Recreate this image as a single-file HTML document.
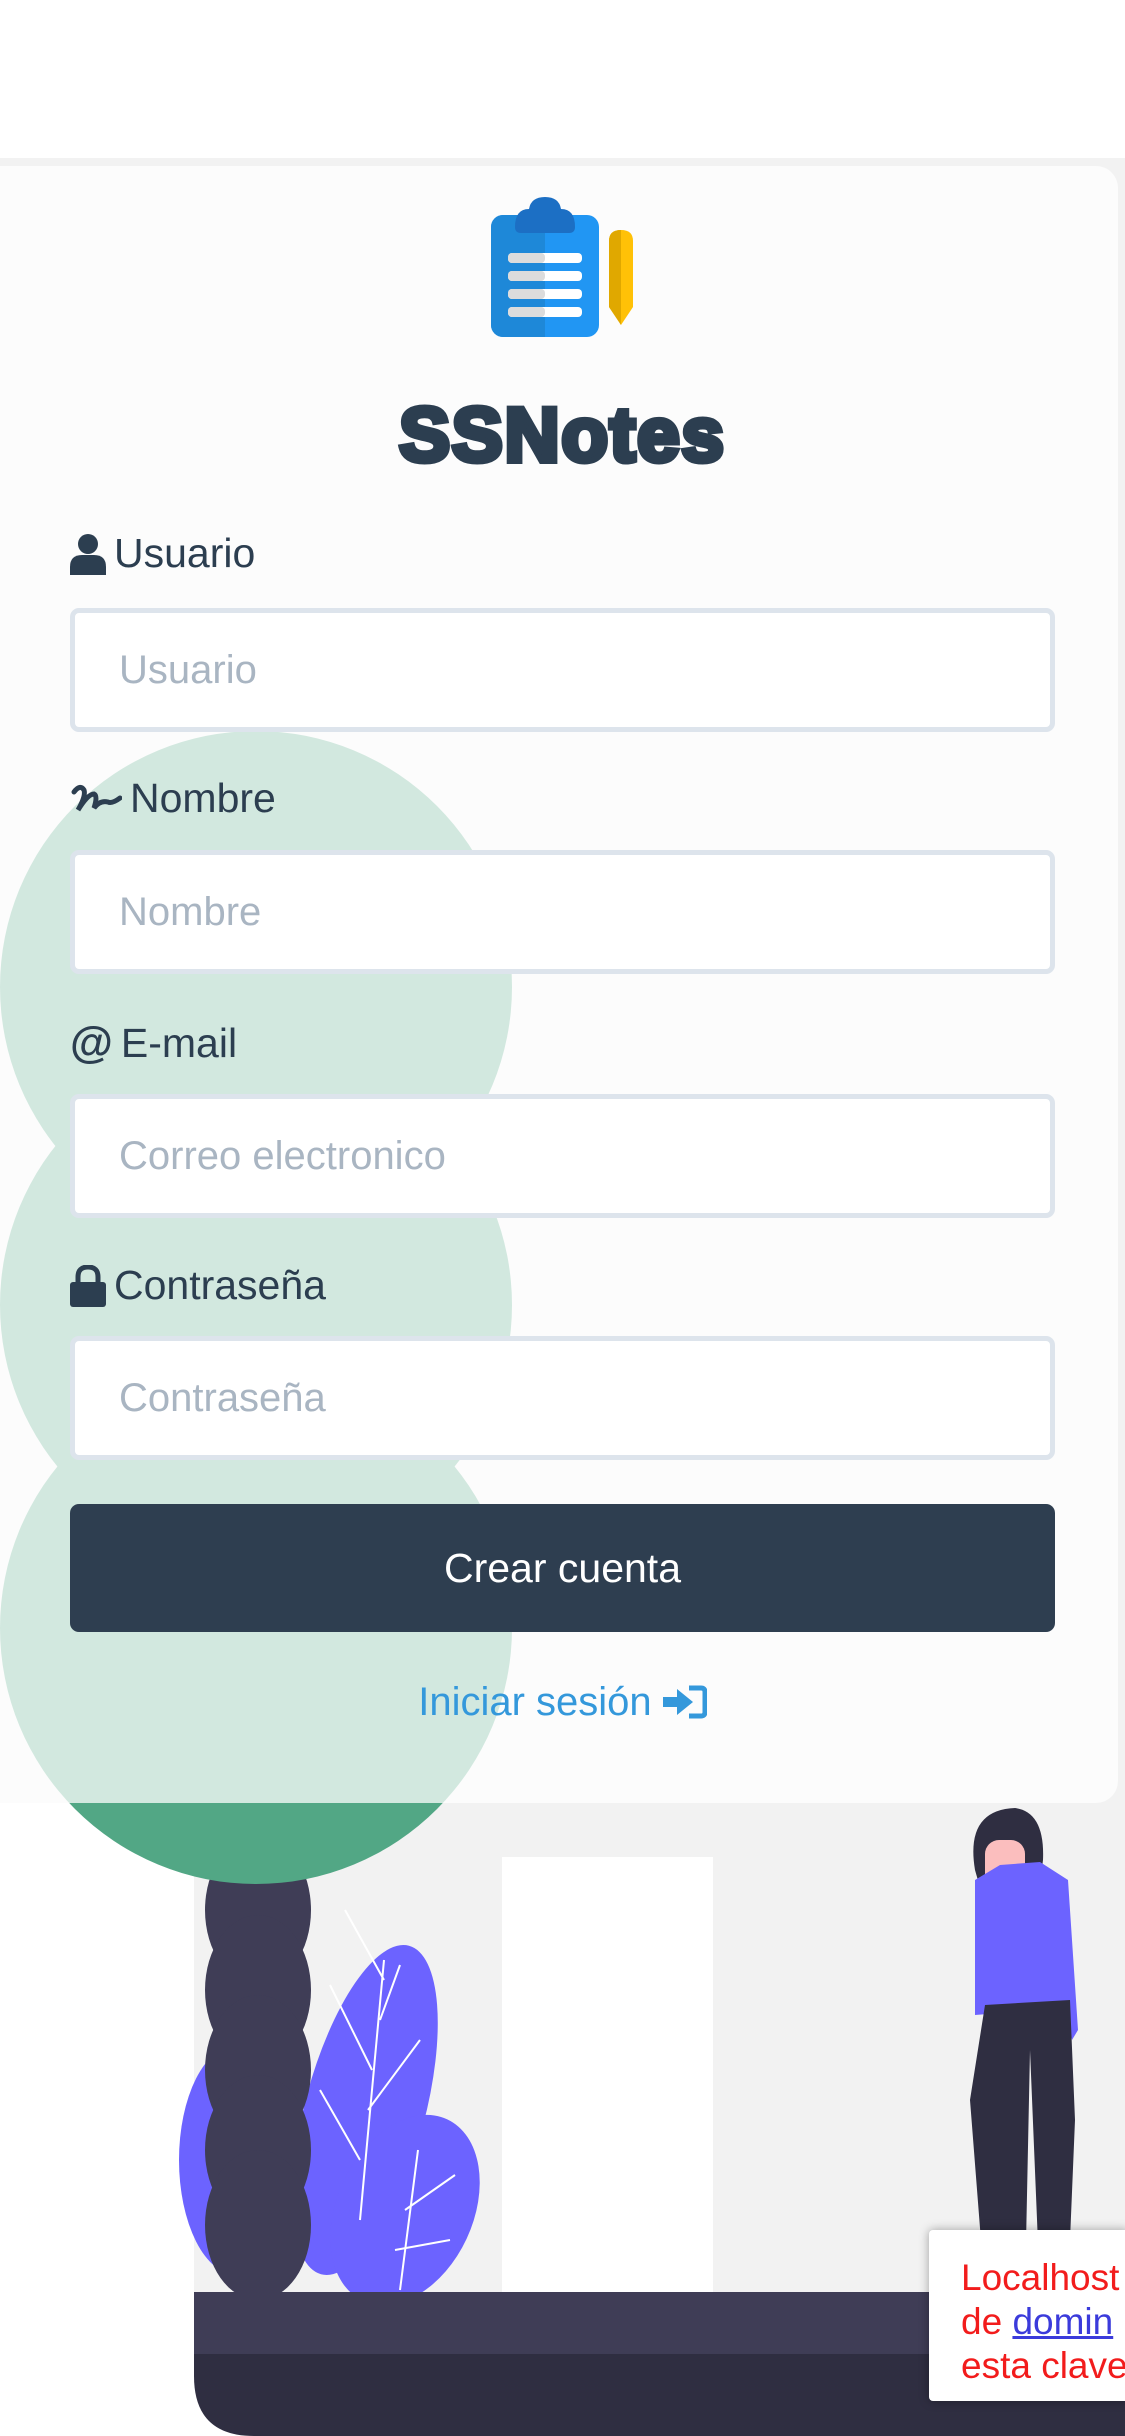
<!DOCTYPE html>
<html><head><meta charset="utf-8"><style>
*{margin:0;padding:0;box-sizing:border-box}
html,body{width:1125px;height:2436px;overflow:hidden;background:#fff;font-family:"Liberation Sans",sans-serif}
#bg{position:absolute;left:0;top:0}
.card{position:absolute;left:0;top:166px;width:1118px;height:1637px;background:rgba(255,255,255,0.74);border-radius:0 22px 22px 0}
.lbl{position:absolute;left:70px;font-size:41px;color:#2c3e50;display:flex;align-items:center;gap:8px}
.inp{position:absolute;left:70px;width:985px;height:124px;background:#fff;border:5px solid #dde4ec;border-radius:9px;font-size:40px;color:#a9b5c2;padding-left:44px;display:flex;align-items:center}
.btn{position:absolute;left:70px;top:1504px;width:985px;height:128px;background:#2e3e50;border-radius:9px;color:#fff;font-size:41px;display:flex;align-items:center;justify-content:center}
.link{position:absolute;left:0;width:1125px;top:1680px;text-align:center;font-size:40px;color:#3498db}
.title{position:absolute;left:0;width:1125px;top:392px;text-align:center;font-size:76px;font-weight:bold;color:#2c3e50;letter-spacing:2px;-webkit-text-stroke:6px #2c3e50}
.note{position:absolute;left:929px;top:2230px;width:200px;height:171px;background:#fff;box-shadow:0 0 10px rgba(0,0,0,.35);border-radius:4px;padding:26px 0 0 32px;font-size:37px;line-height:44px;color:#f21c1c;white-space:nowrap;overflow:hidden}
.note u{color:#3b3bdb}
</style></head><body>
<svg id="bg" width="1125" height="2436" viewBox="0 0 1125 2436">
<rect x="0" y="158" width="1125" height="1645" fill="#f2f2f2"/>
<rect x="194" y="1800" width="931" height="500" fill="#f2f2f2"/>
<rect x="502" y="1857" width="211" height="435" fill="#fff"/>
<g fill="#6c63ff">
<ellipse cx="237" cy="2160" rx="58" ry="115"/>
<ellipse cx="365" cy="2110" rx="60" ry="170" transform="rotate(15 365 2110)"/>
<ellipse cx="405" cy="2210" rx="68" ry="100" transform="rotate(25 405 2210)"/>
</g>
<g stroke="#fff" stroke-width="2" fill="none"><path d="M384 1960 L360 2220 M384 1980 L345 1910 M380 2020 L400 1965 M372 2070 L330 1985 M368 2110 L420 2040 M360 2160 L320 2090 M418 2150 L400 2290 M405 2210 L455 2175 M395 2250 L450 2240"/></g>
<g fill="#3f3d56"><ellipse cx="258" cy="1910" rx="53" ry="75"/><ellipse cx="258" cy="1990" rx="53" ry="75"/><ellipse cx="258" cy="2070" rx="53" ry="75"/><ellipse cx="258" cy="2150" rx="53" ry="75"/><ellipse cx="258" cy="2225" rx="53" ry="75"/></g>
<g fill="#52a785"><circle cx="256" cy="987" r="256"/><circle cx="256" cy="1305" r="256"/><circle cx="256" cy="1628" r="256"/></g>
<rect x="194" y="2292" width="931" height="64" fill="#3f3d56"/>
<path d="M194 2354 H1125 V2436 H254 Q194 2436 194 2376 Z" fill="#2f2e41"/>
<path d="M975 1870 Q965 1810 1015 1808 Q1045 1812 1043 1860 Q1040 1890 1020 1890 L985 1905 Z" fill="#2f2e41"/>
<rect x="985" y="1840" width="40" height="58" rx="14" fill="#fbbebe"/>
<path d="M975 1880 L1000 1865 L1040 1862 L1068 1880 L1078 2030 L1072 2040 L1065 2008 L975 2015 Z" fill="#6c63ff"/>
<path d="M985 2005 L1070 2000 L1075 2120 L1070 2240 L1080 2292 L1040 2292 L1030 2050 L1025 2292 L985 2292 L970 2100 Z" fill="#2f2e41"/>
</svg>
<div class="card"></div>
<svg style="position:absolute;left:491px;top:197px" width="145" height="142" viewBox="0 0 145 142">
<rect x="0" y="18" width="108" height="122" rx="12" fill="#2196f3"/>
<rect x="0" y="18" width="54" height="122" rx="12" fill="#1e88d8"/><rect x="40" y="18" width="14" height="122" fill="#1e88d8"/>
<path d="M24 30 Q24 12 38 12 Q40 0 54 0 Q68 0 70 12 Q84 12 84 30 Q84 36 78 36 H30 Q24 36 24 30Z" fill="#1c6fc4"/>
<g fill="#fff"><rect x="17" y="56" width="74" height="10" rx="4"/><rect x="17" y="74" width="74" height="10" rx="4"/><rect x="17" y="92" width="74" height="10" rx="4"/><rect x="17" y="110" width="74" height="10" rx="4"/></g>
<g fill="#dcdcdc"><rect x="17" y="56" width="37" height="10" rx="4"/><rect x="17" y="74" width="37" height="10" rx="4"/><rect x="17" y="92" width="37" height="10" rx="4"/><rect x="17" y="110" width="37" height="10" rx="4"/></g>
<path d="M118 44 Q118 33 130 33 Q142 33 142 44 V110 L130 128 L118 110Z" fill="#ffc107"/>
<path d="M118 44 Q118 33 130 33 V128 L118 110Z" fill="#e0a800"/>
</svg>
<div class="title">SSNotes</div>
<div class="lbl" style="top:530px"><svg width="36" height="42" viewBox="0 0 36 42"><circle cx="18" cy="11" r="10" fill="#2c3e50"/><path d="M0 42 V34 Q0 22 12 22 H24 Q36 22 36 34 V42Z" fill="#2c3e50"/></svg>Usuario</div>
<div class="inp" style="top:608px">Usuario</div>
<div class="lbl" style="top:775px"><svg width="52" height="34" viewBox="0 0 52 34"><path d="M4 10 Q10 2 14 8 Q16 14 8 28 Q18 12 24 12 Q28 14 24 26 Q30 18 38 20 Q42 22 50 16" stroke="#2c3e50" stroke-width="5" fill="none" stroke-linecap="round"/></svg>Nombre</div>
<div class="inp" style="top:850px">Nombre</div>
<div class="lbl" style="top:1018px"><span style="font-weight:bold;font-size:44px">@</span>E-mail</div>
<div class="inp" style="top:1094px">Correo electronico</div>
<div class="lbl" style="top:1262px"><svg width="36" height="42" viewBox="0 0 36 42"><path d="M8 18 V12 Q8 2 18 2 Q28 2 28 12 V18" stroke="#2c3e50" stroke-width="5" fill="none"/><rect x="0" y="17" width="36" height="25" rx="3" fill="#2c3e50"/></svg>Contraseña</div>
<div class="inp" style="top:1336px">Contraseña</div>
<div class="btn">Crear cuenta</div>
<div class="link">Iniciar sesión <svg width="44" height="34" viewBox="0 0 44 34" style="vertical-align:-4px"><path d="M0 12 H14 V4 L30 17 L14 30 V22 H0Z" fill="#3498db"/><path d="M26 3 H38 Q42 3 42 7 V27 Q42 31 38 31 H26" stroke="#3498db" stroke-width="5" fill="none"/></svg></div>
<div class="note">Localhost<br>de <u>domin</u><br>esta clave</div>
</body></html>
